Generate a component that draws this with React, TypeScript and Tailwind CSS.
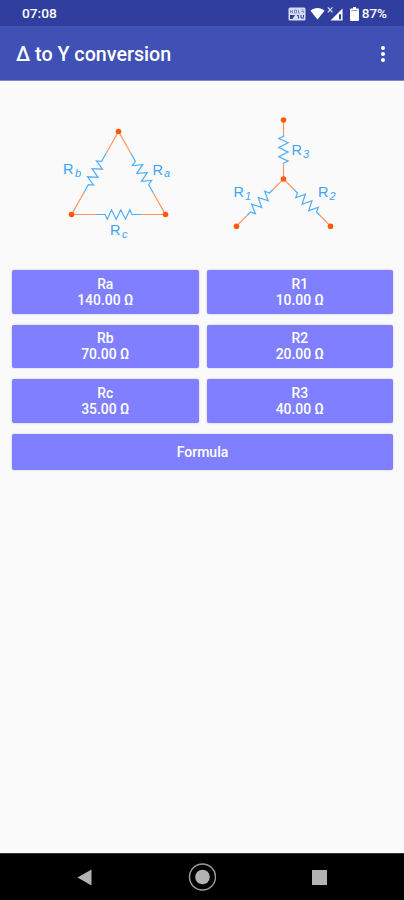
import { useState } from "react"

type Value = { name: string; ohms: number }

const rows: [Value, Value][] = [
  [{ name: "Ra", ohms: 140 }, { name: "R1", ohms: 10 }],
  [{ name: "Rb", ohms: 70 }, { name: "R2", ohms: 20 }],
  [{ name: "Rc", ohms: 35 }, { name: "R3", ohms: 40 }],
]

function StatusBar() {
  return (
    <div className="flex h-[26px] shrink-0 items-center justify-between bg-[#303f9f] pl-[22px] pr-[17px] pt-px text-white">
      <span className="text-[13.700px] font-medium leading-none">07:08</span>
      <div className="flex items-center">
        <svg width="18" height="14" viewBox="0 0 18 14" className="mr-[4px]">
          <rect x="0.5" y="0.5" width="17" height="13" rx="1.500" fill="#d9dcf2" />
          <path d="M2.500 3v3M2.500 4.500h2M4.500 3v3M6.500 3v3h2V3zM10.500 3v3h1.500M13.500 3h2M13.500 4.500h2v1.500" stroke="#7f89c8" fill="none" />
          <path d="M2 8h5l-2.500 4H2z" fill="#303f9f" />
          <path d="M9 8.500h1.500v3M13 8v3h3M15.500 8v2" stroke="#303f9f" fill="none" />
        </svg>
        <svg width="15" height="13" viewBox="0 0 15 13" className="mr-[2px]">
          <path d="M0.500 3.700C4.500 0 10.500 0 14.500 3.700L7.500 12.500z" fill="#fff" />
        </svg>
        <svg width="17" height="16" viewBox="0 0 17 16" className="mr-[6px]">
          <path d="M0.800 1.300l4.700 5M5.500 1.300l-4.700 5" stroke="#dfe2f6" strokeWidth="1.200" />
          <path d="M3.500 14.500L15.500 2.500v12z" fill="#fff" />
          <path d="M12 8.200h2v5h-2z" fill="#303f9f" />
        </svg>
        <svg width="9" height="14" viewBox="0 0 9 14" className="mr-[3px]">
          <path d="M3 0h3v1.500h2q1 0 1 1V13q0 1-1 1H1q-1 0-1-1V2.500q0-1 1-1h2z" fill="#fff" />
          <path d="M1.500 3h6v1h-6z" fill="#8f98d2" />
        </svg>
        <span className="text-[13.500px] font-medium leading-none">87%</span>
      </div>
    </div>
  )
}

function AppBar() {
  return (
    <header className="flex h-[55px] shrink-0 items-center justify-between border-b border-[#7d88cc] bg-[#3f51b5] pl-4 pr-[19px] text-white">
      <h1 className="pt-[3px] text-[19.700px] font-medium">Δ to Y conversion</h1>
      <button aria-label="More options" className="flex flex-col gap-[2px] pt-px">
        <span className="size-1 rounded-full bg-white" />
        <span className="size-1 rounded-full bg-white" />
        <span className="size-1 rounded-full bg-white" />
      </button>
    </header>
  )
}

// Resistor centred on (x, y), turned by angle, with wires out to half the given length
function Resistor({ x, y, angle, length, lead }: { x: number; y: number; angle: number; length: number; lead: number }) {
  const half = length / 2
  return (
    <g transform={`translate(${x} ${y}) rotate(${angle})`} fill="none">
      <path d={`M${-half} 0H${-lead}M${lead} 0H${half}`} stroke="#ff9563" strokeWidth="1.200" />
      <path
        d={`M${-lead} 0H-13.500L-11.300 4.700L-7 -4.700L-2.300 4.700L2.300 -4.700L7 4.700L11.300 -4.700L13.500 0H${lead}`}
        stroke="#51aef8"
        strokeWidth="1.200"
      />
    </g>
  )
}

function Node({ x, y }: { x: number; y: number }) {
  return <circle cx={x} cy={y} r="2.800" fill="#ff5a0a" />
}

function Label({ x, y, sub, dx = 1, dy = 3 }: { x: number; y: number; sub: string; dx?: number; dy?: number }) {
  return (
    <text x={x} y={y} fontSize="14.500" fill="#3fa4f8">
      R
      <tspan dx={dx} dy={dy} fontSize="11" fontStyle="italic">{sub}</tspan>
    </text>
  )
}

function Circuits() {
  return (
    <svg
      width="404"
      height="189"
      viewBox="0 81 404 189"
      className="shrink-0 font-['Liberation_Sans',Arial,sans-serif]"
    >
      <Resistor x={95} y={173} angle={-60.500} length={95} lead={23} />
      <Resistor x={142} y={173} angle={60.500} length={95} lead={23} />
      <Resistor x={118.5} y={214.5} angle={0} length={94} lead={23} />
      <Node x={118.5} y={131.5} />
      <Node x={71.5} y={214.5} />
      <Node x={165.5} y={214.5} />
      <Label x={63} y={173.5} sub="b" dx={1.5} />
      <Label x={152.500} y={175} sub="a" dy={2} />
      <Label x={110} y={235} sub="c" dx={1.5} />

      <Resistor x={283.5} y={149.8} angle={90} length={59} lead={15} />
      <Resistor x={260} y={202.5} angle={-45} length={66} lead={18} />
      <Resistor x={307} y={202.5} angle={45} length={66} lead={18} />
      <Node x={283.5} y={120} />
      <Node x={283.5} y={179} />
      <Node x={236.5} y={226.3} />
      <Node x={330.5} y={226.3} />
      <Label x={291.5} y={155} sub="3" />
      <Label x={233.5} y={197} sub="1" />
      <Label x={318} y={197} sub="2" />
    </svg>
  )
}

function ValueButton({ value, active, onClick }: { value: Value; active: boolean; onClick: () => void }) {
  return (
    <button
      aria-pressed={active}
      onClick={onClick}
      className="flex h-[43.500px] flex-1 flex-col items-center justify-center rounded-[2px] bg-[#807fff] text-[13.900px] font-medium leading-4 text-white shadow-[0_0_2px_#b9b9e6]"
    >
      <span>{value.name}</span>
      <span>{value.ohms.toFixed(2)} Ω</span>
    </button>
  )
}

function NavBar() {
  return (
    <nav className="flex h-[47px] shrink-0 items-center border-t border-[#333] bg-black px-[26px] text-[#b3b3b3]">
      <button aria-label="Back" className="flex flex-1 justify-center">
        <svg width="15" height="17" viewBox="0 0 15 17">
          <path d="M0.500 8.500L14.500 0.500v16z" fill="currentColor" />
        </svg>
      </button>
      <button aria-label="Home" className="flex flex-1 justify-center">
        <svg width="28" height="28" viewBox="0 0 28 28">
          <circle cx="14.500" cy="14" r="13" fill="none" stroke="#999" strokeWidth="1.500" />
          <circle cx="14.500" cy="14" r="7.300" fill="currentColor" />
        </svg>
      </button>
      <button aria-label="Recent apps" className="flex flex-1 justify-center">
        <span className="size-[15px] bg-current" />
      </button>
    </nav>
  )
}

export default function App() {
  const [selected, setSelected] = useState("")

  return (
    <div className="flex h-[900px] w-[404px] flex-col bg-[#fafafa] font-[Roboto,sans-serif]">
      <StatusBar />
      <AppBar />
      <Circuits />
      <main className="flex flex-1 flex-col gap-[11px] pl-3 pr-[11px]">
        {rows.map((row) => (
          <div key={row[0].name} className="flex gap-2">
            {row.map((value) => (
              <ValueButton
                key={value.name}
                value={value}
                active={selected === value.name}
                onClick={() => setSelected(value.name)}
              />
            ))}
          </div>
        ))}
        <button className="h-9 rounded-[2px] bg-[#807fff] pt-px text-[14px] font-medium text-white shadow-[0_0_2px_#b9b9e6]">
          Formula
        </button>
      </main>
      <NavBar />
    </div>
  )
}
